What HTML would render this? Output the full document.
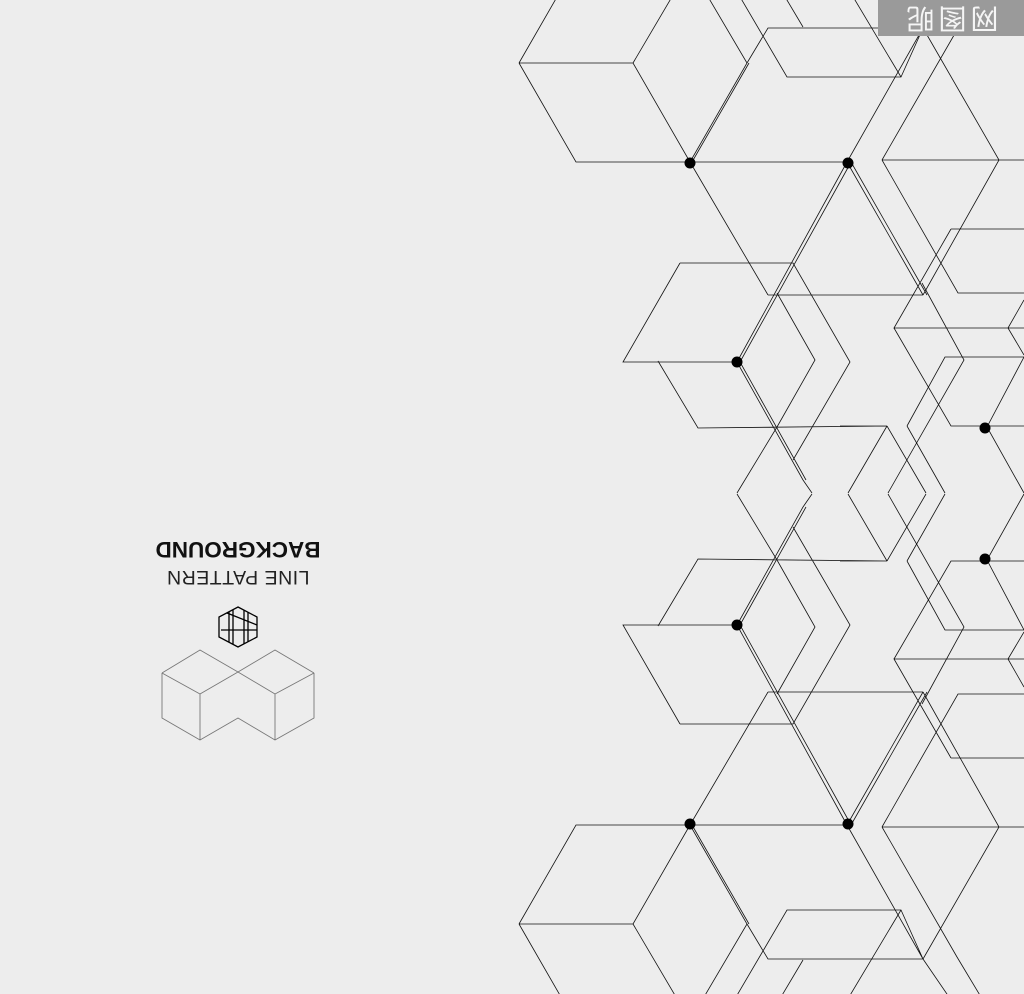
<!DOCTYPE html>
<html><head><meta charset="utf-8"><style>
html,body{margin:0;padding:0;background:#ededed;}
body{width:1024px;height:994px;position:relative;overflow:hidden;font-family:"Liberation Sans",sans-serif;}
svg{position:absolute;left:0;top:0;}
.wm{position:absolute;left:878px;top:0;width:146px;height:36px;background:#9a9a9a;}
.wmt{position:absolute;left:893px;top:2px;width:115px;height:32px;transform:rotate(180deg);color:#fff;font-size:28px;letter-spacing:4px;line-height:32px;opacity:.9;font-family:"Liberation Sans","Noto Sans CJK SC",sans-serif;text-align:center}
.t1{position:absolute;left:128px;top:537px;width:220px;text-align:center;transform:rotate(180deg);font-weight:bold;font-size:22.5px;color:#111;line-height:24px;}
.t2{position:absolute;left:128px;top:566px;width:220px;text-align:center;transform:rotate(180deg);font-size:19.5px;color:#222;line-height:22px;letter-spacing:0.5px}
</style></head><body>
<svg width="1024" height="994" viewBox="0 0 1024 994">
<defs>
<g id="half" fill="none" stroke="#111" stroke-width="0.8">
<path d="M519,63 L561,-10 M519,63 L633,63 M633,63 L676,-10 M519,63 L576,162 L690,162 M633,63 L690,162 M704,-10 L747,63 L690,162 M692,162 L749,63
M736,-10 L787,77 L901,77 L923,28 L768,28 L747,63 M781,-10 L803,27 M849,-10 L901,77
M690,162 L847,162 M847,162 L923,28 L949,-10
M923,28 L999,160 L923,295 M882,160 L1024,160 M882,160 L957,30 L981,-10 M882,160 L958,293 L1024,293
M847,162 L923,295 M851,162 L927,295 M768,295 L923,295 M690,162 L768,295 M847,162 L737,362 M850,164 L740,362
M680,263 L793,263 L850,362 L793,460 M680,263 L623,362 L737,362
M658,361 L698,428 L887,426 M737,362 L803,480 L812,493 M740,362 L806,480
M777,293 L815,360 L777,427 L737,493
M887,426 L848,493 M887,426 L926,493 M840,426 L887,426
M907,426 L945,493 M907,426 L945,357 L1024,357 M922,283 L964,360 L888,493
M894,328 L951,426 L1024,426 M951,229 L1024,229 M951,229 L894,328 L1024,328
M1024,357 L987,427 L1024,493 M1008,328 L1024,300 M1008,328 L1024,355"/>
<circle cx="690" cy="163" r="5.5" fill="#000" stroke="none"/>
<circle cx="848" cy="163" r="5.5" fill="#000" stroke="none"/>
<circle cx="737" cy="362" r="5.5" fill="#000" stroke="none"/>
<circle cx="985" cy="428" r="5.5" fill="#000" stroke="none"/>
</g>
</defs>
<use href="#half"/>
<use href="#half" transform="matrix(1,0,0,-1,0,987)"/>
<g fill="none" stroke="#777" stroke-width="0.9">
<path d="M162,673 L200,650 L238,672 L275,650 L314,673 M162,673 L200,694 L238,672 L275,694 L314,673 M162,673 L162,718 L200,740 L238,718 L275,740 L314,718 L314,673 M200,694 L200,740 M275,694 L275,740"/>
</g>
<g fill="none" stroke="#000" stroke-width="1.3">
<path d="M238,607 L257,617 L257,637 L238,647 L219,637 L219,617 Z"/>
<path d="M229,612 L229,642 M233,610 L233,644 M244,610 L244,644 M248,612 L248,642 M221,630 L257,630 M227,613 L257,625"/>
</g>
</svg>
<div class="wm"></div>
<div class="wmt">网图昵</div>
<div class="t1">BACKGROUND</div>
<div class="t2">LINE PATTERN</div>
</body></html>
